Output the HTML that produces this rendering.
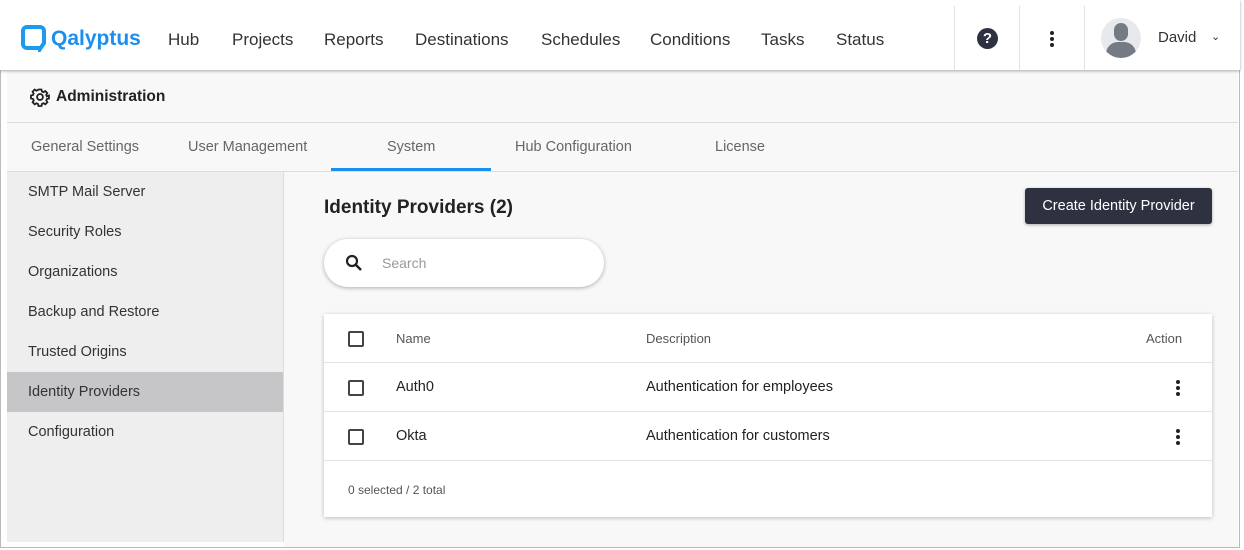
<!DOCTYPE html><html><head><style>
*{box-sizing:border-box;margin:0;padding:0}
body{width:1244px;height:550px;background:#fff;font-family:"Liberation Sans",sans-serif;color:#222;position:relative;overflow:hidden}
.frame{position:absolute;left:0;top:0;width:1240px;height:548px;border:1px solid #bbb;border-top:none}
.abs{position:absolute}
.nav a{position:absolute;top:30px;font-size:17px;color:#333}
.sep{position:absolute;top:6px;width:1px;height:64px;background:#e2e2e2}
.side div{position:absolute;left:28px;font-size:14.5px;color:#333}
.th{font-size:13px;color:#555}
.cb{position:absolute;width:16px;height:16px;border:2px solid #444;border-radius:2px}
.dots{position:absolute;width:4px}
.dots i{display:block;width:4px;height:4px;border-radius:2px;background:#222;margin-bottom:2px}
</style></head><body>
<div class="abs" style="left:0;top:0;width:1240px;height:70px;background:#fff;box-shadow:0 1px 3px rgba(0,0,0,.35);z-index:2"></div>
<div style="z-index:3;position:absolute;left:0;top:0;width:1244px;height:70px">
<svg class="abs" style="left:21px;top:25px" width="25" height="27" viewBox="0 0 25 27"><path d="M6 2h13a4 4 0 0 1 4 4v12l-4 6v-1H6a4 4 0 0 1-4-4V6a4 4 0 0 1 4-4z" fill="none" stroke="#1a9bf0" stroke-width="4"/></svg>
<div class="abs" style="left:51px;top:27px;font-size:21px;font-weight:bold;color:#1a8ff0">Qalyptus</div>
<div class="nav"><a style="left:168px">Hub</a><a style="left:232px">Projects</a><a style="left:324px">Reports</a><a style="left:415px">Destinations</a><a style="left:541px">Schedules</a><a style="left:650px">Conditions</a><a style="left:761px">Tasks</a><a style="left:836px">Status</a></div>
<div class="sep" style="left:954px"></div><div class="sep" style="left:1019px"></div><div class="sep" style="left:1084px"></div>
<div class="abs" style="left:977px;top:28px;width:21px;height:21px;border-radius:50%;background:#2e3240;color:#fff;font-weight:bold;font-size:15px;text-align:center;line-height:21px">?</div>
<div class="dots" style="left:1050px;top:31px"><i></i><i></i><i></i></div>
<div class="abs" style="left:1101px;top:18px;width:40px;height:40px;border-radius:50%;background:#e8e9ec;overflow:hidden"><div class="abs" style="left:13px;top:5px;width:14px;height:18px;border-radius:7px;background:#757b85"></div><div class="abs" style="left:5px;top:24px;width:30px;height:20px;border-radius:12px 12px 0 0;background:#757b85"></div></div>
<div class="abs" style="left:1158px;top:29px;font-size:15px;color:#333">David</div>
<div class="abs" style="left:1211px;top:30px;font-size:11px;color:#333">&#8964;</div>
</div>
<div class="abs" style="left:7px;top:71px;width:1231px;height:52px;background:#f8f8f8;border-bottom:1px solid #ddd"></div>
<svg class="abs" style="left:30px;top:87px" width="20" height="20" viewBox="0 0 24 24"><path d="M10 2h4l.6 2.7 2 .9 2.4-1.5 2.8 2.8-1.5 2.4.9 2L24 10v4l-2.7.6-.9 2 1.5 2.4-2.8 2.8-2.4-1.5-2 .9L14 24h-4l-.6-2.7-2-.9-2.4 1.5-2.8-2.8 1.5-2.4-.9-2L0 14v-4l2.7-.6.9-2L2.1 5 4.9 2.1l2.4 1.5 2-.9z" fill="none" stroke="#222" stroke-width="2.4" transform="scale(.9) translate(1.3 1.3)"/><circle cx="12" cy="12" r="3.5" fill="none" stroke="#222" stroke-width="2.2"/></svg>
<div class="abs" style="left:56px;top:88px;font-size:15.5px;font-weight:bold;color:#222">Administration</div>
<div class="abs" style="left:7px;top:123px;width:1231px;height:49px;background:#f8f8f8;border-bottom:1px solid #ddd"></div>
<div class="abs" style="top:139px;left:31px;font-size:14.5px;color:#666">General Settings</div>
<div class="abs" style="top:139px;left:188px;font-size:14.5px;color:#666">User Management</div>
<div class="abs" style="top:139px;left:387px;font-size:14.5px;color:#666">System</div>
<div class="abs" style="top:139px;left:515px;font-size:14.5px;color:#666">Hub Configuration</div>
<div class="abs" style="top:139px;left:715px;font-size:14.5px;color:#666">License</div>
<div class="abs" style="left:331px;top:168px;width:160px;height:3px;background:#1a8ff0"></div>
<div class="abs" style="left:7px;top:172px;width:277px;height:370px;background:#eeeeef;border-right:1px solid #ddd"></div>
<div class="abs" style="left:284px;top:172px;width:954px;height:375px;background:#f8f8f8"></div>
<div class="abs" style="left:7px;top:372px;width:276px;height:40px;background:#c6c6c8"></div>
<div class="side"><div style="top:184px">SMTP Mail Server</div><div style="top:224px">Security Roles</div><div style="top:264px">Organizations</div><div style="top:304px">Backup and Restore</div><div style="top:344px">Trusted Origins</div><div style="top:384px">Identity Providers</div><div style="top:424px">Configuration</div></div>
<div class="abs" style="left:324px;top:197px;font-size:19px;font-weight:bold;color:#222">Identity Providers (2)</div>
<div class="abs" style="left:1025px;top:188px;width:187px;height:36px;background:#2e3240;border-radius:3px;color:#fff;font-size:14.5px;text-align:center;line-height:36px;box-shadow:0 1px 3px rgba(0,0,0,.3)">Create Identity Provider</div>
<div class="abs" style="left:324px;top:239px;width:280px;height:48px;background:#fff;border-radius:24px;box-shadow:0 1px 4px rgba(0,0,0,.3)"></div>
<svg class="abs" style="left:345px;top:254px" width="18" height="18" viewBox="0 0 18 18"><circle cx="7" cy="7" r="5" fill="none" stroke="#222" stroke-width="2.2"/><path d="M11 11l5 5" stroke="#222" stroke-width="2.5"/></svg>
<div class="abs" style="left:382px;top:255px;font-size:14px;color:#999">Search</div>
<div class="abs" style="left:324px;top:314px;width:888px;height:203px;background:#fff;box-shadow:0 1px 4px rgba(0,0,0,.25)"></div>
<div class="abs" style="left:324px;top:362px;width:888px;height:1px;background:#e3e3e3"></div>
<div class="abs" style="left:324px;top:411px;width:888px;height:1px;background:#e3e3e3"></div>
<div class="abs" style="left:324px;top:460px;width:888px;height:1px;background:#e3e3e3"></div>
<div class="cb" style="left:348px;top:331px"></div><div class="cb" style="left:348px;top:380px"></div><div class="cb" style="left:348px;top:429px"></div>
<div class="abs th" style="left:396px;top:331px">Name</div><div class="abs th" style="left:646px;top:331px">Description</div><div class="abs th" style="left:1146px;top:331px">Action</div>
<div class="abs" style="left:396px;top:379px;font-size:14.5px">Auth0</div><div class="abs" style="left:646px;top:379px;font-size:14.5px">Authentication for employees</div>
<div class="abs" style="left:396px;top:428px;font-size:14.5px">Okta</div><div class="abs" style="left:646px;top:428px;font-size:14.5px">Authentication for customers</div>
<div class="dots" style="left:1176px;top:380px"><i></i><i></i><i></i></div>
<div class="dots" style="left:1176px;top:429px"><i></i><i></i><i></i></div>
<div class="abs" style="left:348px;top:483px;font-size:12px;color:#555">0 selected / 2 total</div>
<div class="frame"></div>
</body></html>
